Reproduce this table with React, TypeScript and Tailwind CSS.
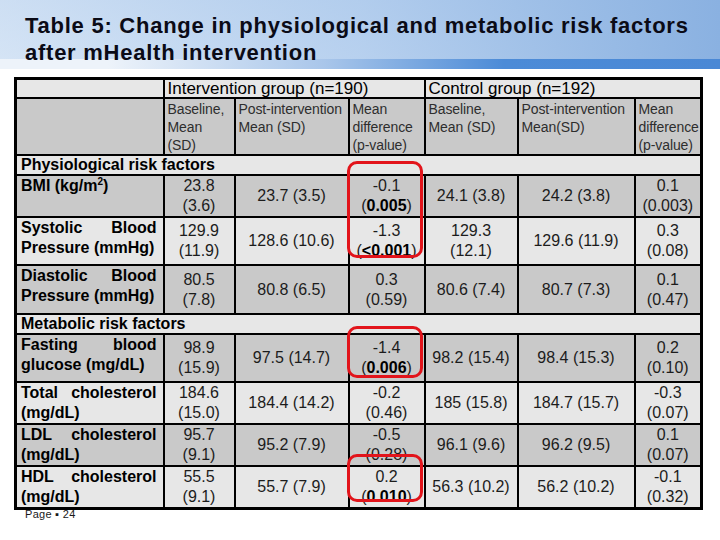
import React from 'react';

type Tone = 'dark' | 'light';

interface DataRow {
  label: React.ReactNode;
  tone: Tone;
  height: string;
  cells: React.ReactNode[];
}

const pv = (diff: string, p: string, bold = false) => (
  <>
    {diff} ({bold ? <b className="font-bold text-black">{p}</b> : p})
  </>
);

const physiological: DataRow[] = [
  {
    label: (
      <>
        BMI (kg/m<span className="relative -top-[6px] text-[10px]">2</span>)
      </>
    ),
    tone: 'dark',
    height: 'h-[39px]',
    cells: ['23.8 (3.6)', '23.7 (3.5)', pv('-0.1', '0.005', true), '24.1 (3.8)', '24.2 (3.8)', pv('0.1', '0.003')],
  },
  {
    label: 'Systolic Blood Pressure (mmHg)',
    tone: 'light',
    height: 'h-[48px]',
    cells: ['129.9 (11.9)', '128.6 (10.6)', pv('-1.3', '<0.001', true), '129.3 (12.1)', '129.6 (11.9)', pv('0.3', '0.08')],
  },
  {
    label: 'Diastolic Blood Pressure (mmHg)',
    tone: 'dark',
    height: 'h-[49px]',
    cells: ['80.5 (7.8)', '80.8 (6.5)', pv('0.3', '0.59'), '80.6 (7.4)', '80.7 (7.3)', pv('0.1', '0.47')],
  },
];

const metabolic: DataRow[] = [
  {
    label: 'Fasting blood glucose (mg/dL)',
    tone: 'dark',
    height: 'h-[48px]',
    cells: ['98.9 (15.9)', '97.5 (14.7)', pv('-1.4', '0.006', true), '98.2 (15.4)', '98.4 (15.3)', pv('0.2', '0.10')],
  },
  {
    label: 'Total cholesterol (mg/dL)',
    tone: 'light',
    height: 'h-[39px]',
    cells: ['184.6 (15.0)', '184.4 (14.2)', pv('-0.2', '0.46'), '185 (15.8)', '184.7 (15.7)', pv('-0.3', '0.07')],
  },
  {
    label: 'LDL cholesterol (mg/dL)',
    tone: 'dark',
    height: 'h-[37px]',
    cells: ['95.7 (9.1)', '95.2 (7.9)', pv('-0.5', '0.28'), '96.1 (9.6)', '96.2 (9.5)', pv('0.1', '0.07')],
  },
  {
    label: 'HDL cholesterol (mg/dL)',
    tone: 'light',
    height: 'h-[39px]',
    cells: ['55.5 (9.1)', '55.7 (7.9)', pv('0.2', '0.010', true), '56.3 (10.2)', '56.2 (10.2)', pv('-0.1', '0.32')],
  },
];

const cell = 'border-2 border-black';
const toneBg: Record<Tone, string> = { dark: 'bg-[#c9c9c9]', light: 'bg-[#e7e7e7]' };

const SectionRow: React.FC<{ title: string; height: string }> = ({ title, height }) => (
  <tr className={`${height} bg-[#e7e7e7]`}>
    <td colSpan={7} className={`${cell} pl-[4px] py-0 text-[16px] font-bold leading-[18px] text-black align-middle`}>
      {title}
    </td>
  </tr>
);

const Row: React.FC<{ row: DataRow }> = ({ row }) => (
  <tr className={`${row.height} ${toneBg[row.tone]}`}>
    <td className={`${cell} pl-[4px] pr-[6px] py-0 align-top text-justify text-[16px] font-bold leading-[20px] text-black`}>
      {row.label}
    </td>
    {row.cells.map((c, i) => (
      <td key={i} className={`${cell} px-[4px] py-0 align-middle text-center text-[16px] leading-[20px] text-[#1c1c1c]`}>
        {c}
      </td>
    ))}
  </tr>
);

const subHeads = [
  'Baseline, Mean (SD)',
  'Post-intervention Mean (SD)',
  'Mean difference (p-value)',
  'Baseline, Mean (SD)',
  'Post-intervention Mean(SD)',
  'Mean difference (p-value)',
];

export default function App() {
  return (
    <div className="w-[720px] h-[540px] bg-white overflow-hidden [font-family:'Liberation_Sans',Arial,sans-serif]">
      <header className="h-[69px] [background:linear-gradient(to_right,#edf3fa_15%,#a9c6ea_45%,#4c8bd7_70%,#4a88d5)_bottom/100%_10px_no-repeat,linear-gradient(to_bottom,#c4d8f0,#dae7f6),#c9dcf2]">
        <div className="h-[59px] pl-[25px] pt-[12px] bg-gradient-to-r from-[#d3e3f5]/60 via-[#aac8ec]/70 to-[#8ab1e1]">
          <h1 className="text-[22px] font-bold leading-[27px] tracking-[0.75px] text-[#0b0b16] whitespace-nowrap">
            Table 5: Change in physiological and metabolic risk factors
            <br />
            after mHealth intervention
          </h1>
        </div>
      </header>

      <div className="relative ml-[14px] mt-[8px] w-[689px]">
        <table className="w-[689px] table-fixed border-collapse border-[3px] border-black">
          <colgroup>
            <col className="w-[148px]" />
            <col className="w-[71px]" />
            <col className="w-[114px]" />
            <col className="w-[76px]" />
            <col className="w-[93px]" />
            <col className="w-[117px]" />
            <col />
          </colgroup>
          <tbody>
            <tr className="h-[17px] bg-[#e7e7e7]">
              <td className={cell} />
              <td colSpan={3} className={`${cell} pl-[3px] py-0 text-[17px] leading-[17px] text-black`}>
                Intervention group (n=190)
              </td>
              <td colSpan={3} className={`${cell} pl-[3px] py-0 text-[17px] leading-[17px] text-black`}>
                Control group (n=192)
              </td>
            </tr>
            <tr className="h-[52px] bg-[#c9c9c9]">
              <td className={cell} />
              {subHeads.map((s, i) => (
                <td key={i} className={`${cell} pl-[3px] pr-[1px] pt-[1px] pb-0 align-top text-[14px] leading-[18px] tracking-[-0.1px] text-[#2e2e2e]`}>
                  {s}
                </td>
              ))}
            </tr>
            <SectionRow title="Physiological risk factors" height="h-[20px]" />
            {physiological.map((r, i) => (
              <Row key={i} row={r} />
            ))}
            <SectionRow title="Metabolic risk factors" height="h-[19px]" />
            {metabolic.map((r, i) => (
              <Row key={i} row={r} />
            ))}
          </tbody>
        </table>

        <div className="absolute left-[333px] top-[84px] w-[76px] h-[97px] rounded-[10px] border-[3px] border-[#e2141b]" />
        <div className="absolute left-[333px] top-[249px] w-[76px] h-[52px] rounded-[10px] border-[3px] border-[#e2141b]" />
        <div className="absolute left-[333px] top-[377px] w-[76px] h-[48px] rounded-[10px] border-[3px] border-[#e2141b]" />
      </div>

      <div className="-mt-[2px] pl-[25px] text-[11px] leading-[12px] text-[#1a1a1a] tracking-[0.3px]">Page ▪ 24</div>
    </div>
  );
}
